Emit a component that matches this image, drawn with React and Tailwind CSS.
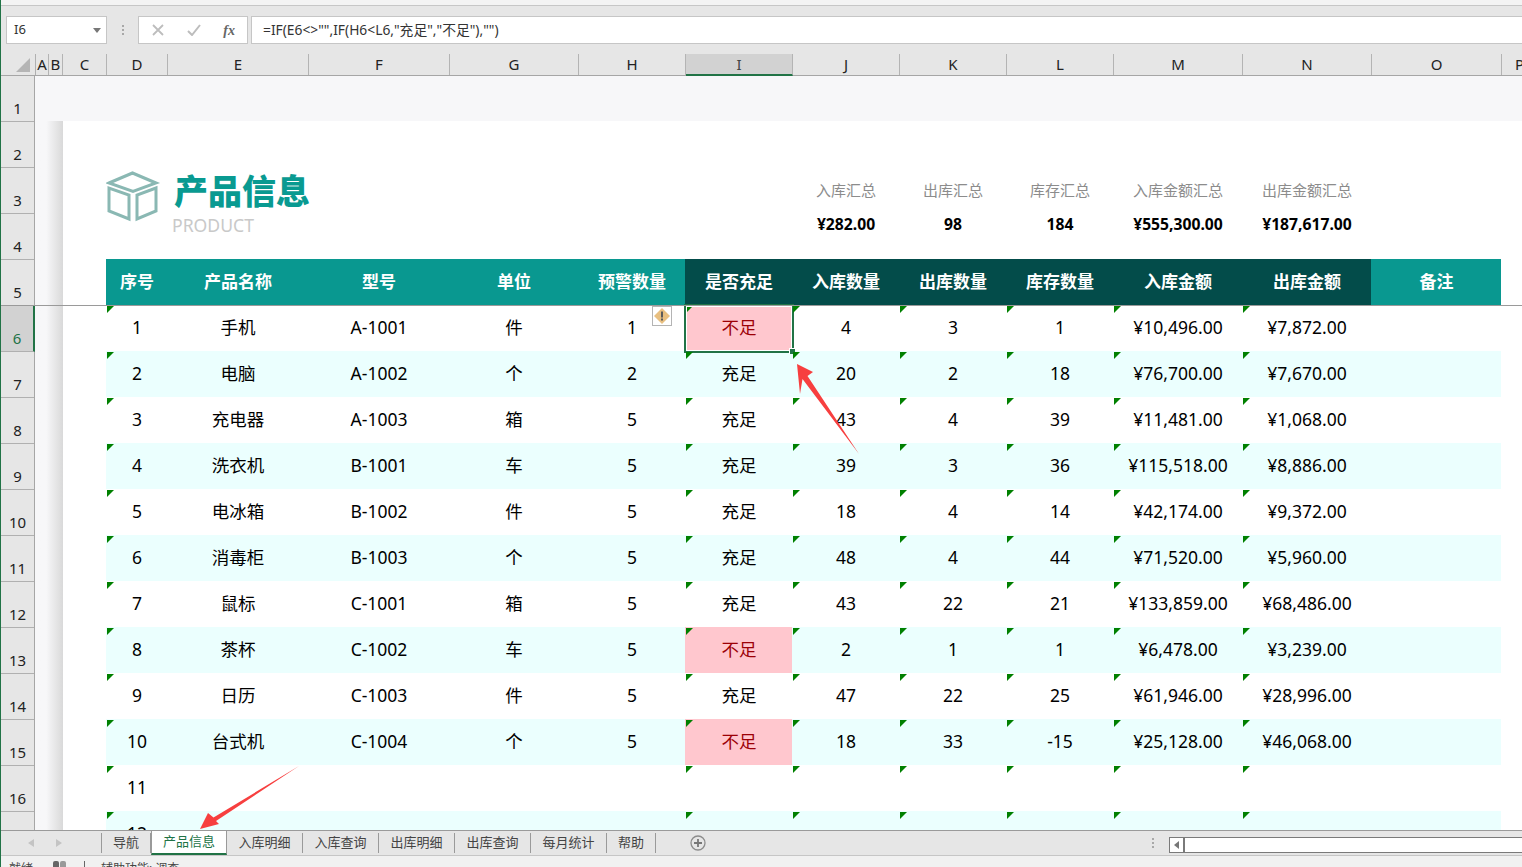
import React from 'react'

const colHeads = [
  ['A', 'w-[13px]'], ['B', 'w-[14px]'], ['C', 'w-[44px]'], ['D', 'w-[61px]'], ['E', 'w-[141px]'], ['F', 'w-[141px]'],
  ['G', 'w-[129px]'], ['H', 'w-[107px]'], ['I', 'w-[107px]'], ['J', 'w-[107px]'], ['K', 'w-[107px]'], ['L', 'w-[107px]'],
  ['M', 'w-[129px]'], ['N', 'w-[129px]'], ['O', 'w-[130px]'], ['P', 'w-[36px]'],
]

const tableHeads = [
  ['序号', 0], ['产品名称', 0], ['型号', 0], ['单位', 0], ['预警数量', 0], ['是否充足', 1], ['入库数量', 1],
  ['出库数量', 1], ['库存数量', 1], ['入库金额', 1], ['出库金额', 1], ['备注', 0],
]

const stats = [
  ['入库汇总', '¥282.00'], ['出库汇总', '98'], ['库存汇总', '184'],
  ['入库金额汇总', '¥555,300.00'], ['出库金额汇总', '¥187,617.00'],
]

const rows = [
  ['1', '手机', 'A-1001', '件', '1', '不足', '4', '3', '1', '¥10,496.00', '¥7,872.00'],
  ['2', '电脑', 'A-1002', '个', '2', '充足', '20', '2', '18', '¥76,700.00', '¥7,670.00'],
  ['3', '充电器', 'A-1003', '箱', '5', '充足', '43', '4', '39', '¥11,481.00', '¥1,068.00'],
  ['4', '洗衣机', 'B-1001', '车', '5', '充足', '39', '3', '36', '¥115,518.00', '¥8,886.00'],
  ['5', '电冰箱', 'B-1002', '件', '5', '充足', '18', '4', '14', '¥42,174.00', '¥9,372.00'],
  ['6', '消毒柜', 'B-1003', '个', '5', '充足', '48', '4', '44', '¥71,520.00', '¥5,960.00'],
  ['7', '鼠标', 'C-1001', '箱', '5', '充足', '43', '22', '21', '¥133,859.00', '¥68,486.00'],
  ['8', '茶杯', 'C-1002', '车', '5', '不足', '2', '1', '1', '¥6,478.00', '¥3,239.00'],
  ['9', '日历', 'C-1003', '件', '5', '充足', '47', '22', '25', '¥61,946.00', '¥28,996.00'],
  ['10', '台式机', 'C-1004', '个', '5', '不足', '18', '33', '-15', '¥25,128.00', '¥46,068.00'],
  ['11', '', '', '', '', '', '', '', '', '', ''],
  ['12', '', '', '', '', '', '', '', '', '', ''],
]

const tabs = ['导航', '产品信息', '入库明细', '入库查询', '出库明细', '出库查询', '每月统计', '帮助']
const flagged = [0, 5, 6, 7, 8, 9, 10]

const Flag = () => (
  <span className="absolute left-px top-px w-[7px] h-[7px] bg-[#008000] [clip-path:polygon(0_0,100%_0,0_100%)]" />
)

const Dots = () => (
  <div className="flex flex-col gap-[2px]">
    <span className="w-[2px] h-[2px] bg-[#a8a8a8]" />
    <span className="w-[2px] h-[2px] bg-[#a8a8a8]" />
    <span className="w-[2px] h-[2px] bg-[#a8a8a8]" />
  </div>
)

const FormulaBar = () => (
  <div className="h-[48px] bg-[#e6e6e6] flex items-start pt-[10px] pl-[5px]">
    <div className="w-[101px] h-[28px] bg-white border border-[#c6c6c6] flex items-center justify-between pl-[7px] pr-[5px] text-[13px] text-[#333]">
      <span>I6</span>
      <svg width="8" height="5" viewBox="0 0 8 5"><path d="M0 0h8L4 5z" fill="#777" /></svg>
    </div>
    <div className="w-[31px] h-[28px] flex items-center justify-center"><Dots /></div>
    <div className="w-[110px] h-[28px] bg-white border border-[#c6c6c6] flex items-center justify-between pl-[13px] pr-[12px]">
      <svg width="12" height="12" viewBox="0 0 12 12"><path d="M1 1l10 10M11 1L1 11" stroke="#bdbdbd" strokeWidth="1.8" fill="none" /></svg>
      <svg width="14" height="12" viewBox="0 0 14 12"><path d="M1 7l4 4 8-10" stroke="#bdbdbd" strokeWidth="2" fill="none" /></svg>
      <span className="font-['Liberation_Serif',serif] italic font-bold text-[14px] text-[#666]">fx</span>
    </div>
    <div className="w-[3px]" />
    <div className="flex-1 h-[28px] bg-white border border-[#c6c6c6] border-r-0 flex items-center pl-[11px] text-[13.8px] text-[#333]">
      {'=IF(E6<>"",IF(H6<L6,"充足","不足"),"")'}
    </div>
  </div>
)

const ColumnHeader = () => (
  <div className="h-[22px] bg-[#e6e6e6] border-b border-[#a6a6a6] flex">
    <div className="w-[35px] shrink-0 flex items-end justify-end pr-[5px] pb-[3px] border-r border-[#b0b0b0]">
      <svg width="14" height="14" viewBox="0 0 14 14"><path d="M14 0v14H0z" fill="#b5b5b5" /></svg>
    </div>
    {colHeads.map(([name, width]) => (
      <div
        key={name}
        className={
          width +
          ' shrink-0 flex items-center justify-center text-[15px] leading-none border-r border-[#b4b4b4] ' +
          (name === 'I' ? 'bg-[#d2d2d2] border-b-2 border-b-[#217346] text-[#444] h-[22px]' : 'text-[#222]')
        }
      >
        {name}
      </div>
    ))}
  </div>
)

const RowHeader = () => (
  <div className="w-[34px] shrink-0 bg-[#e6e6e6] flex flex-col border-r border-[#a6a6a6]">
    {Array.from({ length: 16 }, (_, i) => i + 1).map((n) => (
      <div
        key={n}
        className={
          'h-[46px] shrink-0 flex items-end justify-center pb-[3px] text-[15px] leading-[20px] border-b border-[#b0b0b0] ' +
          (n === 6 ? 'bg-[#d2d2d2] text-[#217346] border-r-2 border-r-[#217346] -mr-px' : 'text-[#222]')
        }
      >
        {n}
      </div>
    ))}
  </div>
)

const PageTitle = () => (
  <div className="h-[138px] flex">
    <div className="w-[686px] flex pt-[49px]">
      <svg width="68" height="54" viewBox="0 0 68 54" className="shrink-0">
        <g fill="none" stroke="#8ab8b3" strokeWidth="3">
          <path d="M3 13L26.500 3 50 13 27 21.500z" />
          <path d="M3 18v23l20 8V25z" />
          <path d="M31 25v24l19-8V18z" />
        </g>
      </svg>
      <div className="flex flex-col pt-[2px]">
        <div className="text-[34px] leading-[38px] font-black text-[#099a91]">产品信息</div>
        <div className="text-[17.6px] leading-[24px] text-[#c9c9c9] -ml-[2px] mt-[3px]">PRODUCT</div>
      </div>
    </div>
    <div className="grid grid-cols-[107px_107px_107px_129px_129px] pt-[59px]">
      {stats.map(([label, value]) => (
        <div key={label} className="flex flex-col items-center pl-px">
          <div className="text-[15px] leading-[20px] text-[#8c8c8c]">{label}</div>
          <div className="text-[15.7px] leading-[20px] font-bold text-black mt-[14px]">{value}</div>
        </div>
      ))}
    </div>
  </div>
)

const TableHead = () => (
  <div className="grid grid-cols-[61px_141px_141px_129px_107px_107px_107px_107px_107px_129px_129px_130px] h-[46px]">
    {tableHeads.map(([name, dark]) => (
      <div
        key={name}
        className={
          'flex items-center justify-center pl-px text-white font-bold text-[17px] ' +
          (dark ? 'bg-[#034c4a]' : 'bg-[#099890]')
        }
      >
        {name}
      </div>
    ))}
  </div>
)

const Cell = ({ value, index, rowIndex }) => {
  const short = value === '不足'
  const selected = short && rowIndex === 0
  return (
    <div
      className={
        'relative flex items-center justify-center pl-px pb-[2px] text-[17.5px] ' +
        (short ? 'bg-[#ffc7ce] text-[#9c0006]' : 'text-black')
      }
    >
      {value}
      {flagged.includes(index) && <Flag />}
      {selected && (
        <>
          <div className="absolute -left-px -top-px -right-[2px] -bottom-[2px] border-2 border-[#217346]">
            <div className="w-full h-full border border-white" />
          </div>
          <div className="absolute -right-[3px] -bottom-[3px] w-[6px] h-[6px] bg-[#217346] border-l border-t border-white" />
        </>
      )}
      {index === 4 && rowIndex === 0 && (
        <div className="absolute right-[13px] top-px w-[20px] h-[20px] bg-white border border-[#b4b4b4] flex items-center justify-center">
          <svg width="16" height="16" viewBox="0 0 16 16">
            <path d="M8 0l8 8-8 8-8-8z" fill="#e8bf80" />
            <path d="M7 3.500h2v6H7zM7 10.500h2v2H7z" fill="#5a5a5a" />
          </svg>
        </div>
      )}
    </div>
  )
}

const TableRows = () => (
  <div>
    {rows.map((row, rowIndex) => (
      <div
        key={row[0]}
        className={
          'grid grid-cols-[61px_141px_141px_129px_107px_107px_107px_107px_107px_129px_129px_130px] w-[1395px] h-[46px] ' +
          (rowIndex % 2 === 1 ? 'bg-[#ebfffe]' : 'bg-white')
        }
      >
        {row.map((value, index) => (
          <Cell key={index} value={value} index={index} rowIndex={rowIndex} />
        ))}
        <div />
      </div>
    ))}
  </div>
)

const Sheet = () => (
  <div className="h-[754px] flex overflow-hidden">
    <RowHeader />
    <div className="flex-1 flex flex-col min-w-0">
      <div className="h-[45px] shrink-0 bg-[#f7f7f9]" />
      <div className="flex flex-1">
        <div className="w-[28px] shrink-0 bg-linear-to-r from-[#f7f7f9] from-40% to-[#d9d9d9]" />
        <div className="flex-1 bg-white pl-[43px]">
          <PageTitle />
          <TableHead />
          <TableRows />
        </div>
      </div>
    </div>
  </div>
)

const TabBar = () => (
  <div className="h-[25px] bg-[#e6e6e6] border-t border-[#9a9a9a] flex items-start text-[13px] text-[#444]">
    <div className="w-[100px] h-[23px] flex items-center pl-[27px] gap-[22px]">
      <svg width="6" height="8" viewBox="0 0 6 8"><path d="M6 0v8L0 4z" fill="#c4c4c4" /></svg>
      <svg width="6" height="8" viewBox="0 0 6 8"><path d="M0 0v8l6-4z" fill="#c4c4c4" /></svg>
    </div>
    {tabs.map((tab, i) => (
      <div
        key={tab}
        className={
          'flex items-center justify-center ' +
          (i === 1
            ? 'w-[76px] h-[24px] bg-white border-x border-[#9a9a9a] border-b-2 border-b-[#217346] text-[#217346]'
            : 'h-[20px] mt-[2px] border-r border-[#9a9a9a] ' +
              (i === 0 ? 'w-[50px] border-l' : i === 7 ? 'w-[49px]' : 'w-[76px]'))
        }
      >
        {tab}
      </div>
    ))}
    <div className="w-[84px] h-[23px] flex items-center justify-center">
      <svg width="16" height="16" viewBox="0 0 16 16">
        <circle cx="8" cy="8" r="7" fill="none" stroke="#8c8c8c" strokeWidth="1.300" />
        <path d="M8 4v8M4 8h8" stroke="#777" strokeWidth="1.800" />
      </svg>
    </div>
    <div className="w-[429px] h-[23px] flex items-center justify-end pr-[15px]"><Dots /></div>
    <div className="flex-1 h-[16px] mt-[6px] bg-white border-y border-l border-[#7a7a7a] flex">
      <div className="w-[15px] h-full flex items-center justify-center border-r-2 border-[#7a7a7a]">
        <svg width="5" height="8" viewBox="0 0 5 8"><path d="M5 0v8L0 4z" fill="#777" /></svg>
      </div>
    </div>
  </div>
)

const StatusBar = () => (
  <div className="flex-1 bg-[#f1f1f1] border-t border-[#c6c6c6] overflow-hidden flex items-start pt-[5px] pl-[8px] text-[12px] leading-[16px] text-[#444]">
    <span className="w-[44px]">就绪</span>
    <span className="w-[31px] flex gap-px">
      <span className="w-[6px] h-[8px] bg-[#666] rounded-[2px]" />
      <span className="w-[6px] h-[8px] bg-[#999] rounded-[2px]" />
    </span>
    <span className="w-[17px] flex">
      <span className="w-[11px] h-[8px] border-l border-[#666]" />
    </span>
    <span>辅助功能: 调查</span>
  </div>
)

// the two red callout arrows drawn on top of the screenshot
const Arrows = () => (
  <svg width="1522" height="867" viewBox="0 0 1522 867" className="absolute left-0 top-0 pointer-events-none">
    <path d="M796 364L812 372 806.500 376 858 454 801.500 379 799 394z" fill="#f73f3f" />
    <path d="M199 829L207 813 212.500 817.500 298 766 215 821 218 824z" fill="#f73f3f" />
  </svg>
)

export default function App() {
  return (
    <div className="relative w-[1522px] h-[867px] overflow-hidden bg-[#f1f1f1] border-l border-[#217346] font-['Noto_Sans','Noto_Sans_CJK_SC',sans-serif]">
      <div className="flex flex-col h-full">
        <div className="h-[6px] bg-[#f3f3f3] border-b border-[#c6c6c6]" />
        <FormulaBar />
        <ColumnHeader />
        <Sheet />
        <TabBar />
        <StatusBar />
      </div>
      <div className="absolute left-0 right-0 top-[305px] h-px bg-[#9a9a9a]" />
      <Arrows />
    </div>
  )
}
